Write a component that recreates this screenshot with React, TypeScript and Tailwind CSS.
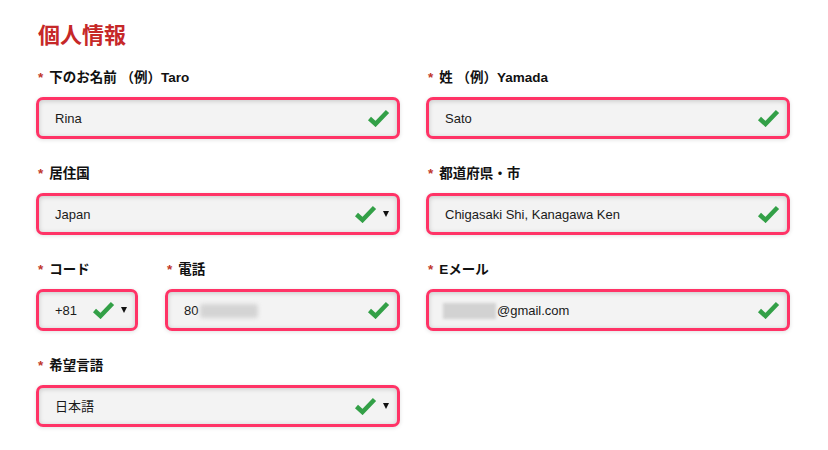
import React from "react";

const font = { fontFamily: "'Liberation Sans', 'Noto Sans CJK JP', sans-serif" };

function Check() {
  return (
    <svg width="23" height="18" viewBox="0 0 23 18" className="shrink-0">
      <path d="M2.5 9.5 L8.5 15 L20.5 2.5" fill="none" stroke="#33a047" strokeWidth="4.5" strokeLinecap="butt" strokeLinejoin="miter" />
    </svg>
  );
}

function Arrow() {
  return (
    <span className="ml-[6px] mr-[1px] inline-block h-0 w-0 border-x-[3.5px] border-t-[6px] border-x-transparent border-t-[#111]" />
  );
}

function Label({ text }: { text: string }) {
  return (
    <div className="flex h-[20px] items-center pl-[2px] text-[13.5px] font-bold text-[#111]">
      <span className="mr-[6px] text-[#c0392b]">*</span>
      {text}
    </div>
  );
}

function Box({ children, select }: { children: React.ReactNode; select?: boolean }) {
  return (
    <div className="mt-[9px] flex h-[42px] items-center rounded-[7px] border-[3px] border-[#ff3366] bg-[#f3f3f3] pl-[16px] pr-[7px] shadow-[inset_0_1px_5px_rgba(0,0,0,0.18),0_1px_4px_rgba(0,0,0,0.12)]">
      <div className="flex flex-1 items-center pt-[1px] text-[13px] text-[#1a1a1a]">{children}</div>
      <Check />
      {select && <Arrow />}
    </div>
  );
}

export default function App() {
  return (
    <div className="h-[450px] w-[828px] bg-white pl-[36px] pt-[21px]" style={font}>
      <h1 className="h-[30px] pl-[2px] text-[22px] font-bold leading-[30px] text-[#c62828]">個人情報</h1>

      <div className="mt-[17px] grid grid-cols-[364px_364px] gap-x-[26px] gap-y-[25px]">
        <div>
          <Label text="下のお名前 （例）Taro" />
          <Box>Rina</Box>
        </div>
        <div>
          <Label text="姓 （例）Yamada" />
          <Box>Sato</Box>
        </div>

        <div>
          <Label text="居住国" />
          <Box select>Japan</Box>
        </div>
        <div>
          <Label text="都道府県・市" />
          <Box>Chigasaki Shi, Kanagawa Ken</Box>
        </div>

        <div className="flex gap-[27px]">
          <div className="w-[102px]">
            <Label text="コード" />
            <Box select>+81</Box>
          </div>
          <div className="flex-1">
            <Label text="電話" />
            <Box>
              80
              <span className="ml-[2px] inline-block h-[14px] w-[58px] rounded-[3px] bg-[#d4d4d4] blur-[2px]" />
            </Box>
          </div>
        </div>
        <div>
          <Label text="Eメール" />
          <Box>
            <span className="-ml-[2px] mr-[1px] inline-block h-[16px] w-[53px] bg-[#d2d2d2] blur-[1.5px]" />
            @gmail.com
          </Box>
        </div>

        <div>
          <Label text="希望言語" />
          <Box select>日本語</Box>
        </div>
      </div>
    </div>
  );
}
